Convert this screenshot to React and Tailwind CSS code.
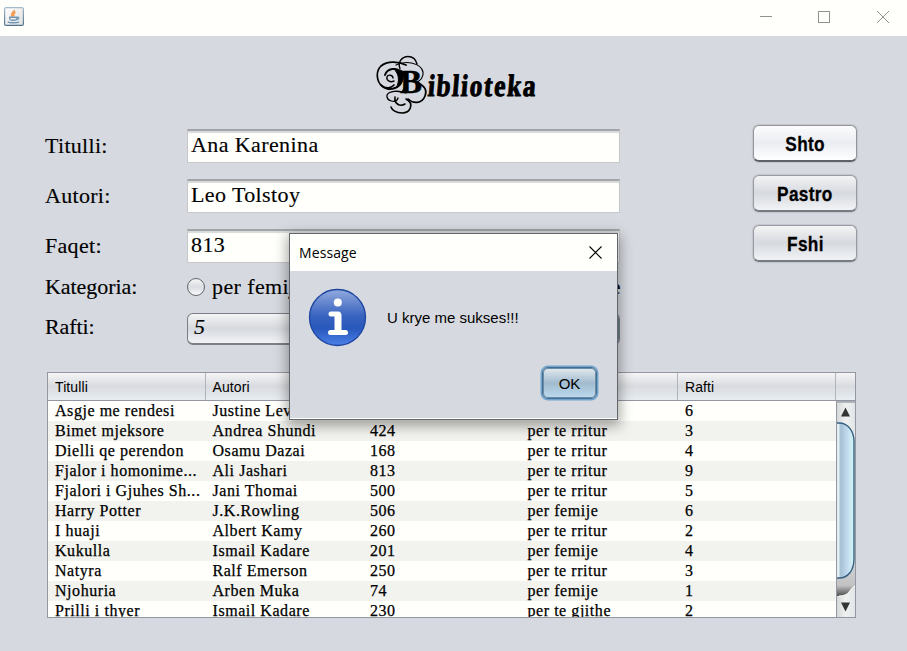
import React from 'react';

const BOOKS = [
  ['Asgje me rendesi', 'Justine Lev', '', '', '6'],
  ['Bimet mjeksore', 'Andrea Shundi', '424', 'per te rritur', '3'],
  ['Dielli qe perendon', 'Osamu Dazai', '168', 'per te rritur', '4'],
  ['Fjalor i homonime...', 'Ali Jashari', '813', 'per te rritur', '9'],
  ['Fjalori i Gjuhes Sh...', 'Jani Thomai', '500', 'per te rritur', '5'],
  ['Harry Potter', 'J.K.Rowling', '506', 'per femije', '6'],
  ['I huaji', 'Albert Kamy', '260', 'per te rritur', '2'],
  ['Kukulla', 'Ismail Kadare', '201', 'per femije', '4'],
  ['Natyra', 'Ralf Emerson', '250', 'per te rritur', '3'],
  ['Njohuria', 'Arben Muka', '74', 'per femije', '1'],
  ['Prilli i thyer', 'Ismail Kadare', '230', 'per te gjithe', '2'],
];

const HEADERS = ['Titulli', 'Autori', '', '', 'Rafti'];

function JavaIcon() {
  return (
    <svg width="20" height="20" viewBox="0 0 20 20">
      <defs>
        <linearGradient id="jb" x1="0" y1="0" x2="0" y2="1">
          <stop offset="0" stopColor="#a4bacb" />
          <stop offset="1" stopColor="#50738d" />
        </linearGradient>
        <linearGradient id="jf" x1="0" y1="0" x2="1" y2="1">
          <stop offset="0" stopColor="#ffffff" />
          <stop offset="1" stopColor="#dfdfdf" />
        </linearGradient>
      </defs>
      <rect x="0.6" y="0.6" width="18.8" height="17.8" rx="1.5" fill="url(#jf)" stroke="url(#jb)" strokeWidth="1.2" />
      <path d="M10.2 3c.7 1.700-3.200 3-2.600 5 .2.700.8 1.100 1.200 1.700M11.500 5.300c-2.400 1.300-2.300 2.200-1.300 3.700" fill="none" stroke="#f5994f" strokeWidth="1.700" />
      <path d="M5 10.300h8M5.700 11c.2 2.600 1.200 2.300 3.700 2.300s3 0 3.300-2.300M13 10.300c2.500-.8 2.200 2-.3 2.300" fill="none" stroke="#6e96b4" strokeWidth="1.400" />
      <path d="M3.700 14.800c2 1.300 9 1.300 11.300 0" fill="none" stroke="#6e96b4" strokeWidth="1.400" />
    </svg>
  );
}

function TitleBar() {
  return (
    <header className="flex h-9 items-start justify-between bg-[#fffffb] pl-1">
      <div className="pt-[7px]"><JavaIcon /></div>
      <svg width="147" height="36" viewBox="0 0 147 36" fill="none" stroke="#91918e" shapeRendering="crispEdges">
        <path d="M0 16.500h12" />
        <rect x="58.500" y="11.500" width="11" height="11" />
        <path d="M117 11l12 12M129 11l-12 12" shapeRendering="auto" />
      </svg>
    </header>
  );
}

function Logo() {
  return (
    <h1 className="ml-[376px] flex h-[60px] w-[170px] items-start font-['Liberation_Serif',serif] font-bold text-black">
      <span className="relative block h-[60px] w-[52px] shrink-0">
        <svg className="absolute left-0 top-0" width="54" height="60" viewBox="0 0 54 60" fill="none" stroke="#000" strokeLinecap="round">
          <path d="M30 10C22 6 11 6 5 11C-1 17 1 27 6 31C10 34 15 33 18 30" strokeWidth="1.700" />
          <path d="M24 14C21 6 27 1.500 32 1.500C37 1.500 40 5 41 9" strokeWidth="1.400" />
          <path d="M20 10C30 5 45 8 47 17C48 22 44 26 41 27" strokeWidth="1.200" />
          <path d="M9 20C11 13 21 12 25 17C28 23 26 31 19 33C14 35 8 34 5 30" strokeWidth="1.900" />
          <path d="M18 14C29 15 30 27 20 33C24 26 23 19 18 14Z" fill="#000" strokeWidth="1" />
          <path d="M18 26C14 28 10 25 11 22C12 19 17 20 17 23" strokeWidth="1.400" />
          <path d="M25 16C30 22 32 30 27 36" strokeWidth="2" />
          <path d="M42 28C49 31 51 36 49 41C46 49 37 49 32 44" strokeWidth="1.700" />
          <path d="M30 38C22 35 13 36 11 40C10 46 20 49 22 43" strokeWidth="1.300" />
          <path d="M19 42C18 49 24 52 29 49M30 44C39 49 34 58 26 58C20 58 16 55 15 52" strokeWidth="1.600" />
        </svg>
        <span className="absolute left-[24px] top-[11px] text-[33px] leading-[33px] [-webkit-text-stroke:0.5px_#000]">B</span>
      </span>
      <span className="mt-[13px] inline-block origin-left -skew-x-6 scale-x-[0.82] text-[31px] leading-[36px] tracking-[2px] [-webkit-text-stroke:1px_#000]">iblioteka</span>
    </h1>
  );
}

function Field({ label, value }) {
  return (
    <div className="flex h-[50px] items-center">
      <label className="w-[142px] pb-px tracking-[0.3px]">{label}</label>
      <div className="mb-px flex h-[34px] w-[433px] items-center border border-t-2 border-[#c7c8ca] border-t-[#a2a4a7] bg-[#fffffb] pb-[3px] pl-[3px] shadow-[inset_0_2px_1px_#d9dadb]">
        {value}
      </div>
    </div>
  );
}

function Radio({ label }) {
  return (
    <span className="flex items-center gap-[7px]">
      <span className="size-[18px] rounded-full border border-[#62666c] bg-linear-to-b from-[#f5f6f7] via-[#d9dce1] to-[#fafbfc]" />
      {label}
    </span>
  );
}

function SideButton({ children, bright }) {
  const tone = bright
    ? 'from-[#fcfcfd] via-[#e9ecf1] to-[#ffffff] border-[#93959a] border-b-[#5f6268]'
    : 'from-[#f3f4f4] via-[#d6d9df] to-[#f1f3f6] border-[#989ba1] border-b-[#777b82]';
  return (
    <button className={'flex h-[37px] w-[104px] items-center justify-center rounded-[6px] border-[1.500px] border-b-2 bg-linear-to-b shadow-[0_0_1px_1px_#c3c6cc] ' + tone}>
      <span className="scale-x-[0.82] pt-[2px] font-['Liberation_Sans',sans-serif] text-[21px] font-bold leading-6 tracking-[0.4px] text-black [-webkit-text-stroke:0.3px_#000]">{children}</span>
    </button>
  );
}

function ScrollBar() {
  return (
    <svg width="19" height="217" viewBox="0 0 19 217" className="block shrink-0">
      <defs>
        <linearGradient id="track" x1="0" x2="1" y1="0" y2="0">
          <stop offset="0" stopColor="#d2d5d6" />
          <stop offset=".5" stopColor="#eff1f1" />
          <stop offset="1" stopColor="#e2e5e6" />
        </linearGradient>
        <linearGradient id="thumb" x1="0" x2="1" y1="0" y2="0">
          <stop offset="0" stopColor="#d8e2e8" />
          <stop offset=".13" stopColor="#e9f1f6" />
          <stop offset=".26" stopColor="#a5bfd3" />
          <stop offset=".65" stopColor="#c3dcf0" />
          <stop offset=".9" stopColor="#d1f0f4" />
        </linearGradient>
        <linearGradient id="gap" x1="0" x2="0" y1="0" y2="1">
          <stop offset="0" stopColor="#d2d3d7" />
          <stop offset=".7" stopColor="#c2c2c4" />
          <stop offset="1" stopColor="#4f4f4f" />
        </linearGradient>
      </defs>
      <rect width="19" height="217" fill="url(#track)" />
      <path d="M0 .8h19" stroke="#a7adb2" strokeWidth="2" />
      <path d="M0 160H19V185C13 188 14 195 3 195H0Z" fill="url(#gap)" />
      <path d="M19 185C13 188 14 195 3 195" fill="none" stroke="#fff" />
      <path d="M0 22H3C12 22 18 30 18 40.500V157.500C18 169.500 12 177 3 177H0Z" fill="url(#thumb)" stroke="#365f80" strokeWidth="1.400" />
      <path d="M.5 0V217" stroke="#9297a1" />
      <path d="M5 15.500L9.500 6.500L14 15.500Z M5 201.500L9.500 210.500L14 201.500Z" fill="#343434" />
    </svg>
  );
}

function BookTable() {
  return (
    <section className="ml-[47px] mt-[16px] h-[246px] w-[809px] overflow-hidden border border-[#9297a1]">
      <div className="flex h-[28px] border-b border-[#9297a1] bg-linear-to-b from-[#f5f5f6] via-[#d9dbdf] to-[#e7edf3] font-['Liberation_Sans',sans-serif] text-[14px]">
        {HEADERS.map((h, i) => (
          <div key={i} className="flex w-[157.5px] shrink-0 items-center border-r border-[#b1b4ba] pl-[7px] pt-px tracking-[0.1px]">{h}</div>
        ))}
      </div>
      <div className="flex h-[217px]">
        <div className="w-[788px] shrink-0 overflow-hidden text-[16px] leading-5 tracking-[0.55px] [-webkit-text-stroke:0.25px_#000]">
          {BOOKS.map((book) => (
            <div key={book[0]} className="flex h-5 bg-[#fffffb] even:bg-[#f2f2ee]">
              {book.map((cell, i) => (
                <div key={i} className="w-[157.5px] shrink-0 whitespace-nowrap pl-[7px]">{cell}</div>
              ))}
            </div>
          ))}
        </div>
        <ScrollBar />
      </div>
    </section>
  );
}

function MessageDialog() {
  return (
    <div role="dialog" className="absolute left-[289px] top-[233px] flex h-[187px] w-[329px] flex-col border border-[#62666a] bg-[#d6d9df] font-['Liberation_Sans',sans-serif] text-black shadow-[0_4px_12px_2px_rgba(0,0,0,0.35),inset_0_-1px_0_#fffffb]">
      <div className="flex h-[37px] shrink-0 items-center justify-between bg-[#fffffb] pl-[9px] pr-[15px]">
        <span className="font-['Open_Sans',sans-serif] text-[14px] tracking-[0.1px]">Message</span>
        <svg width="13" height="13" viewBox="0 0 13 13" stroke="#000" strokeWidth="1.100">
          <path d="M.5 .5l12 12M12.500 .5l-12 12" />
        </svg>
      </div>
      <div className="flex items-center gap-[20px] pl-[18px] pt-[17px]">
        <svg width="59" height="59" viewBox="0 0 59 59">
          <defs>
            <linearGradient id="info" x1="0" x2="0" y1="0" y2="1">
              <stop offset="0" stopColor="#92aade" />
              <stop offset=".48" stopColor="#3762bf" />
              <stop offset=".7" stopColor="#2958bc" />
              <stop offset="1" stopColor="#4c82e9" />
            </linearGradient>
          </defs>
          <circle cx="29.500" cy="29.500" r="28" fill="url(#info)" stroke="#1d46a0" strokeWidth="1.300" />
          <circle cx="29.800" cy="14.500" r="4" fill="#fffffb" />
          <path d="M23 26H30.500V44.500" fill="none" stroke="#fffffb" strokeWidth="5" strokeLinecap="round" strokeLinejoin="round" />
          <path d="M26.500 26H33.500V44H26.500Z" fill="#fffffb" />
          <path d="M22.500 44.500H37.500" stroke="#fffffb" strokeWidth="5" strokeLinecap="round" />
        </svg>
        <span className="pt-[2px] text-[15px]">U krye me sukses!!!</span>
      </div>
      <div className="mr-[20px] mt-[20px] flex justify-end">
        <button className="flex h-[32px] w-[55px] items-center justify-center rounded-[6px] border border-[#456d8e] bg-linear-to-b from-[#e4ebf0] via-[#a2bbce] to-[#bcdaef] pt-[2px] text-[15px] shadow-[inset_0_0_0_1px_#6b8ca6,0_0_0_1.500px_#70a5d1]">OK</button>
      </div>
    </div>
  );
}

export default function App() {
  return (
    <div className="relative h-[651px] w-[907px] overflow-hidden bg-[#d6d9df] font-['Liberation_Serif',serif] text-black">
      <TitleBar />
      <div className="pt-[19px]"><Logo /></div>
      <main className="mt-[6px] flex h-[235px] justify-between pl-[45px] pr-[50px]">
        <div className="text-[22px] leading-7 tracking-[0.4px] [-webkit-text-stroke:0.15px_#000]">
          <Field label="Titulli:" value="Ana Karenina" />
          <Field label="Autori:" value="Leo Tolstoy" />
          <Field label="Faqet:" value="813" />
          <div className="flex h-8 items-center">
            <span className="w-[142px] tracking-[-0.05px]">Kategoria:</span>
            <div className="flex w-[434px] justify-between whitespace-nowrap">
              <Radio label="per femije" />
              <Radio label="per te gjithe" />
            </div>
          </div>
          <div className="flex h-[50px] items-center">
            <span className="w-[142px] pb-[2px] tracking-[-0.1px]">Rafti:</span>
            <div className="mt-px flex h-[32px] w-[433px] items-center justify-between overflow-hidden rounded-[6px] border border-b-2 border-[#7c8086] bg-linear-to-b from-[#f3f4f4] via-[#d6d9df] to-[#f1f3f6] pb-[2px] pl-[6px]">
              <span className="italic">5</span>
              <span className="h-[32px] w-5 bg-[#668398]" />
            </div>
          </div>
        </div>
        <div className="flex flex-col gap-[13px] pt-[4px]">
          <SideButton bright>Shto</SideButton>
          <SideButton>Pastro</SideButton>
          <SideButton>Fshi</SideButton>
        </div>
      </main>
      <BookTable />
      <MessageDialog />
    </div>
  );
}
